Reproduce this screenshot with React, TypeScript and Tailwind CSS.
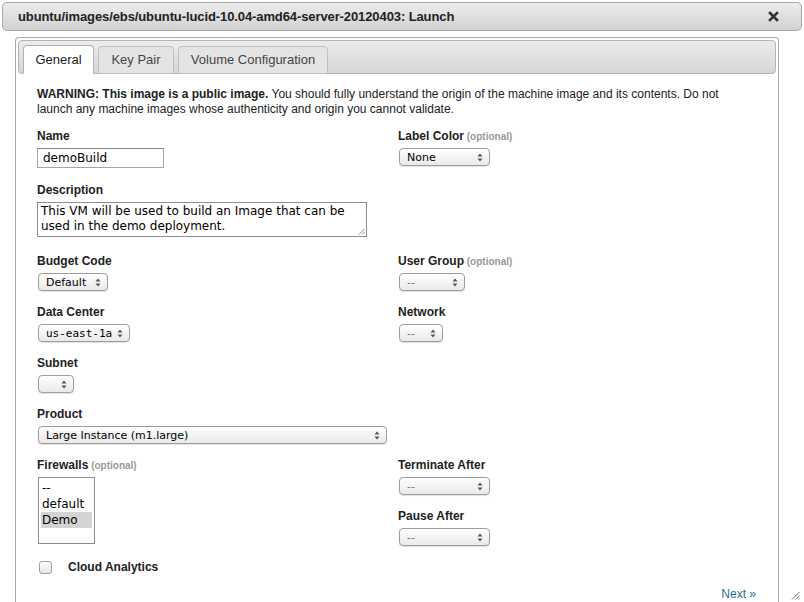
import type { ReactNode } from 'react'

const sans = "font-['Liberation_Sans',Arial,sans-serif]"
const ctl = "font-['DejaVu_Sans',sans-serif]"

function Arrows() {
  return (
    <svg width="6" height="9" viewBox="0 0 6 9" className="shrink-0">
      <path d="M3 0.5 L5.5 3.5 H0.5 Z" fill="#555" />
      <path d="M3 8.5 L5.5 5.5 H0.5 Z" fill="#555" />
    </svg>
  )
}

function Select({ value, className, mono, muted }: { value: string; className: string; mono?: boolean; muted?: boolean }) {
  return (
    <div
      className={`flex items-center justify-between h-[18px] rounded-[4px] border border-[#9d9d9d] bg-gradient-to-b from-white to-[#e9e9e9] pl-[7px] pr-[6px] shadow-[0_1px_1px_rgba(0,0,0,0.12)] ${className}`}
    >
      <span
        className={`text-[11px] leading-none ${mono ? "font-['DejaVu_Sans_Mono',monospace]" : ctl} ${muted ? 'text-[#777]' : 'text-black'}`}
      >
        {value}
      </span>
      <Arrows />
    </div>
  )
}

function Label({ text, optional }: { text: string; optional?: boolean }) {
  return (
    <div className="h-[15px] leading-[15px] text-[12px] font-bold text-[#222] whitespace-nowrap">
      {text}
      {optional && <span className="text-[10px] text-[#999] font-bold"> (optional)</span>}
    </div>
  )
}

function Field({ label, optional, children, className, gap = 'mt-[4px]' }: { label: string; optional?: boolean; children: ReactNode; className: string; gap?: string }) {
  return (
    <div className={className}>
      <Label text={label} optional={optional} />
      <div className={gap}>{children}</div>
    </div>
  )
}

function Grip() {
  return (
    <svg width="9" height="9" viewBox="0 0 9 9">
      <path d="M8.5 1 L1 8.5 M8.5 4.5 L4.5 8.5 M8.5 7.5 L7.5 8.5" stroke="#777" strokeWidth="1" />
    </svg>
  )
}

export default function App() {
  return (
    <div className={`w-[804px] h-[602px] overflow-hidden bg-white ${sans} relative`}>
      {/* Title bar */}
      <div className="mx-[2px] mt-[2px] h-[29px] rounded-[5px] border border-[#a8a8a8] bg-gradient-to-b from-[#ececec] to-[#d2d2d2] flex items-center justify-between pl-[15px] pr-[22px]">
        <span className="text-[13px] font-bold text-[#222] tracking-[-0.1px]">ubuntu/images/ebs/ubuntu-lucid-10.04-amd64-server-20120403: Launch</span>
        <svg width="11" height="11" viewBox="0 0 11 11">
          <path d="M2 2 L9 9 M9 2 L2 9" stroke="#333" strokeWidth="2.6" strokeLinecap="square" />
        </svg>
      </div>

      {/* Panel */}
      <div className="ml-[15px] mt-[6px] w-[764px] h-[580px] rounded-t-[4px] border border-[#aaa] border-b-0 p-[2px] pb-0">
        {/* Tab header */}
        <div className="h-[34px] rounded-[4px] border border-[#b4b4b4] bg-gradient-to-b from-[#ececec] to-[#d6d6d6] flex items-end gap-[4px] pl-[4px]">
          <div className="h-[29px] w-[71px] -mb-px rounded-t-[4px] border border-[#b0b0b0] border-b-white bg-white flex items-center justify-center text-[13px] text-[#222]">
            General
          </div>
          <div className="h-[28px] w-[76px] -mb-px rounded-t-[4px] border border-[#c0c0c0] bg-[#e4e4e4] flex items-center justify-center text-[13px] text-[#444]">
            Key Pair
          </div>
          <div className="h-[28px] w-[150px] -mb-px rounded-t-[4px] border border-[#c0c0c0] bg-[#e4e4e4] flex items-center justify-center text-[13px] text-[#444]">
            Volume Configuration
          </div>
        </div>

        {/* Content */}
        <div className="pl-[19px] pr-[20px] pt-[13px] h-[540px]">
          <p className="text-[12px] leading-[15px] text-[#222]">
            <b>WARNING: This image is a public image.</b> You should fully understand the origin of the machine image and its contents. Do not launch any machine images whose authenticity and origin you cannot validate.
          </p>

          <div className="mt-[12px] grid grid-cols-[360px_1fr]">
            <Field label="Name" className="h-[54px]">
              <div className={`w-[127px] h-[20px] border border-[#a5a5a5] border-t-[#8a8a8a] pl-[5px] flex items-center text-[12px] text-black ${ctl}`}>
                demoBuild
              </div>
            </Field>
            <Field label="Label Color" optional className="h-[54px] pl-[1px]">
              <Select value="None" className="w-[91px] ml-[1px]" />
            </Field>

            <Field label="Description" className="h-[71px]">
              <div className={`relative w-[330px] h-[35px] border border-[#8e8e8e] pl-[3px] pt-[1px] text-[12px] leading-[15px] text-black ${ctl}`}>
                This VM will be used to build an Image that can be used in the demo deployment.
                <div className="absolute right-[1px] bottom-[1px] leading-none">
                  <svg width="7" height="7" viewBox="0 0 7 7">
                    <path d="M6.5 1 L1 6.5 M6.5 4 L4 6.5" stroke="#888" strokeWidth="1" />
                  </svg>
                </div>
              </div>
            </Field>
            <div />

            <Field label="Budget Code" className="h-[51px]">
              <Select value="Default" className="w-[70px] ml-[1px]" />
            </Field>
            <Field label="User Group" optional className="h-[51px] pl-[1px]">
              <Select value="--" muted className="w-[66px] ml-[1px]" />
            </Field>

            <Field label="Data Center" className="h-[51px]">
              <Select value="us-east-1a" mono className="w-[92px] ml-[1px]" />
            </Field>
            <Field label="Network" className="h-[51px] pl-[1px]">
              <Select value="--" muted className="w-[44px] ml-[1px]" />
            </Field>

            <Field label="Subnet" className="h-[51px]">
              <Select value="" className="w-[36px] ml-[1px]" />
            </Field>
            <div />

            <Field label="Product" className="h-[51px] col-span-2">
              <Select value="Large Instance (m1.large)" className="w-[349px] ml-[1px]" />
            </Field>

            <Field label="Firewalls" optional className="h-[94px]" gap="mt-[4px]">
              <div className={`ml-[1px] w-[57px] h-[67px] border border-[#8e8e8e] px-[2px] pt-[2px] text-[12px] leading-[16px] text-black ${ctl}`}>
                <div className="pl-[1px]">--</div>
                <div className="pl-[1px]">default</div>
                <div className="pl-[1px] bg-[#d4d4d4]">Demo</div>
              </div>
            </Field>
            <div className="pl-[1px]">
              <Field label="Terminate After" className="h-[51px]">
                <Select value="--" muted className="w-[91px] ml-[1px]" />
              </Field>
              <Field label="Pause After" className="h-[40px]">
                <Select value="--" muted className="w-[91px] ml-[1px]" />
              </Field>
            </div>
          </div>

          <div className="flex items-center mt-[6px] ml-[2px]">
            <div className="w-[13px] h-[13px] rounded-[3px] border border-[#a0a0a0] bg-gradient-to-b from-white to-[#e6e6e6]" />
            <span className="ml-[16px] text-[12px] font-bold text-[#222]">Cloud Analytics</span>
          </div>

          <div className="flex justify-end mt-[9px]">
            <span className="text-[12px] text-[#2a6f8c]">Next »</span>
          </div>
        </div>
      </div>

      <div className="absolute right-[4px] bottom-[2px] leading-none">
        <Grip />
      </div>
    </div>
  )
}
